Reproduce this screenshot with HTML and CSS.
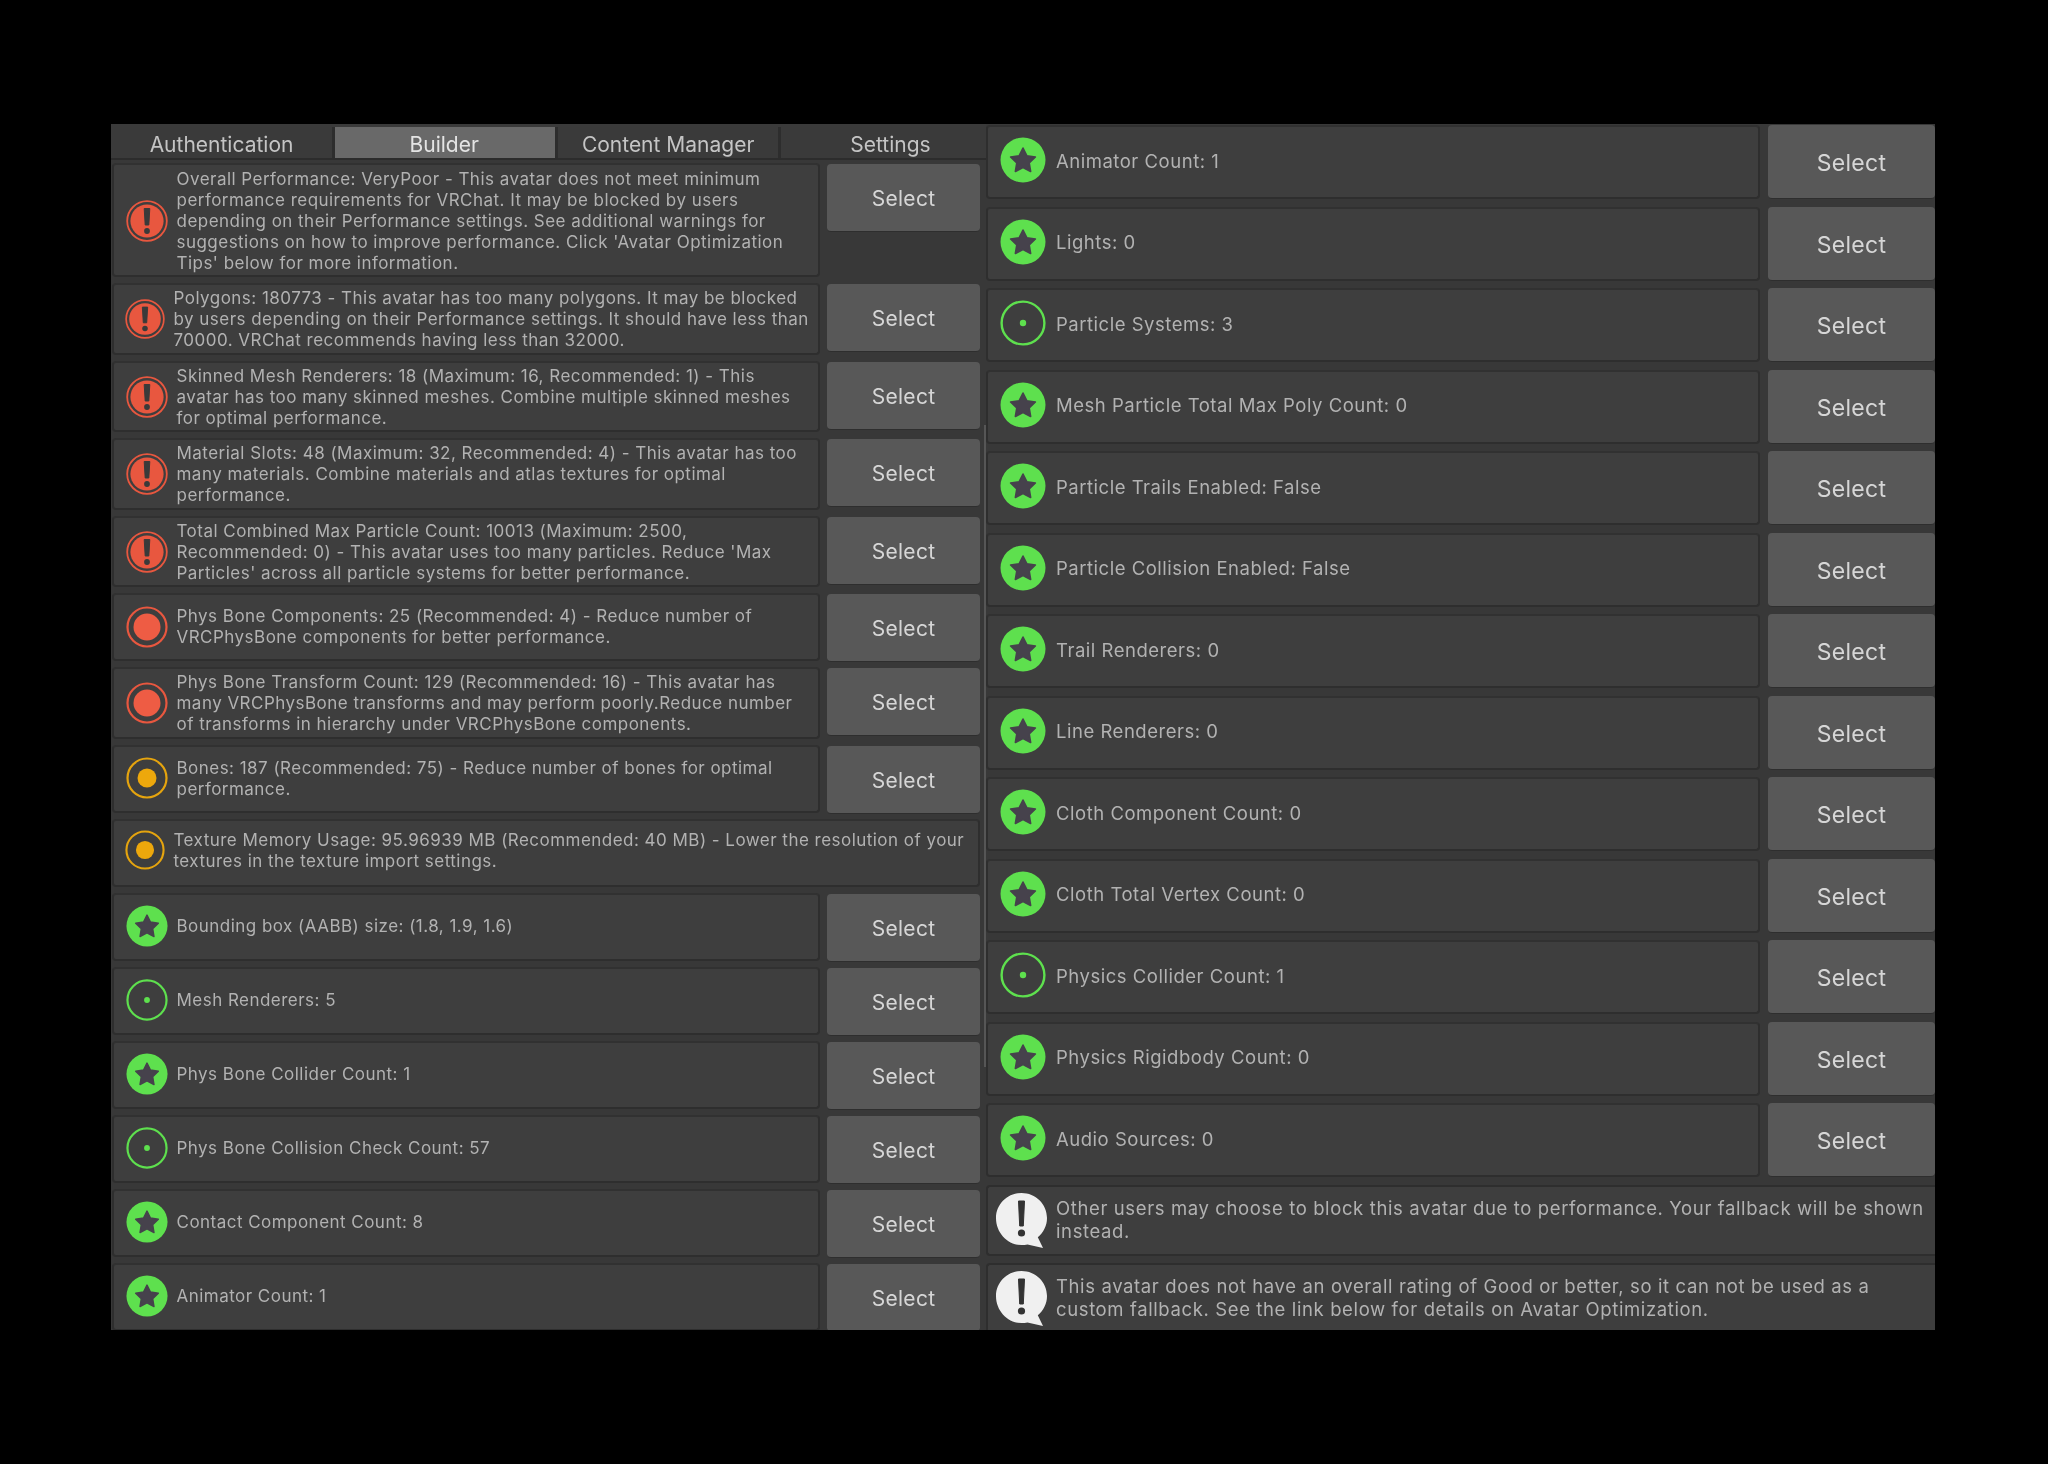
FILE: index.html
```html
<!DOCTYPE html>
<html lang="en">
<head>
<meta charset="utf-8">
<title>VRChat SDK Builder</title>
<link rel="stylesheet" href="styles.css">
</head>
<body>
<svg class="defs" width="0" height="0" aria-hidden="true">
  <symbol id="i-error" viewBox="0 0 42 42">
    <circle cx="21" cy="21" r="19.8" fill="none" stroke="#e8573f" stroke-width="1.8"/>
    <circle cx="21" cy="21" r="16.6" fill="#e8573f"/>
    <path d="M18.2 8.500h5.600l-1 16.500h-3.600z" fill="#3a3a3a" stroke="#3a3a3a" stroke-width="1" stroke-linejoin="round"/>
    <circle cx="21" cy="31" r="2.900" fill="#3a3a3a"/>
  </symbol>
  <symbol id="i-red" viewBox="0 0 42 42">
    <circle cx="21" cy="21" r="19.5" fill="none" stroke="#e8573f" stroke-width="2.2"/>
    <circle cx="21" cy="21" r="13.5" fill="#ee5c44"/>
  </symbol>
  <symbol id="i-yellow" viewBox="0 0 42 42">
    <circle cx="21" cy="21" r="19.5" fill="none" stroke="#e5a40e" stroke-width="2.2"/>
    <circle cx="21" cy="21" r="9.5" fill="#eda80c"/>
  </symbol>
  <symbol id="i-star" viewBox="0 0 46 46">
    <circle cx="23" cy="23" r="22.5" fill="#5ee04e"/>
    <path d="M23 11L26.800 18.700 35.400 20 29.200 26 30.640 34.500 23 30.500 15.360 34.500 16.800 26 10.600 20 19.200 18.700z" fill="#46424c" stroke="#46424c" stroke-width="1.600" stroke-linejoin="round"/>
  </symbol>
  <symbol id="i-dot" viewBox="0 0 46 46">
    <circle cx="23" cy="23" r="21.4" fill="none" stroke="#5ee04e" stroke-width="2.400"/>
    <circle cx="23" cy="23" r="3.200" fill="#5ee04e"/>
  </symbol>
  <symbol id="i-info" viewBox="0 0 51 55">
    <path d="M25.500 0C39.600 0 51 11.200 51 25c0 7.800-3.600 14.700-9.200 19.300L47 55l-15.500-3.600C29.600 51.800 27.600 52 25.500 52 11.400 52 0 39.800 0 25 0 11.200 11.400 0 25.500 0z" fill="#f0f0f0"/>
    <path d="M22.500 8h6l-1.200 25h-3.600z" fill="#333" stroke="#333" stroke-width="1" stroke-linejoin="round"/>
    <circle cx="25.500" cy="40" r="3.600" fill="#333"/>
  </symbol>
</svg>

<main class="panel">
  <section class="col-left">
    <nav class="tabs">
      <div class="tab tab-first">Authentication</div>
      <div class="tab tab-on">Builder</div>
      <div class="tab">Content Manager</div>
      <div class="tab">Settings</div>
    </nav>

    <div class="list-left">
      <div class="row h5">
        <div class="box"><svg class="ic"><use href="#i-error"/></svg><p>Overall Performance: VeryPoor - This avatar does not meet minimum<br>performance requirements for VRChat. It may be blocked by users<br>depending on their Performance settings. See additional warnings for<br>suggestions on how to improve performance. Click 'Avatar Optimization<br>Tips' below for more information.</p></div>
        <button class="btn">Select</button>
      </div>
      <div class="row h3">
        <div class="box tight"><svg class="ic"><use href="#i-error"/></svg><p>Polygons: 180773 - This avatar has too many polygons. It may be blocked<br>by users depending on their Performance settings. It should have less than<br>70000. VRChat recommends having less than 32000.</p></div>
        <button class="btn">Select</button>
      </div>
      <div class="row h3">
        <div class="box"><svg class="ic"><use href="#i-error"/></svg><p>Skinned Mesh Renderers: 18 (Maximum: 16, Recommended: 1) - This<br>avatar has too many skinned meshes. Combine multiple skinned meshes<br>for optimal performance.</p></div>
        <button class="btn">Select</button>
      </div>
      <div class="row h3">
        <div class="box"><svg class="ic"><use href="#i-error"/></svg><p>Material Slots: 48 (Maximum: 32, Recommended: 4) - This avatar has too<br>many materials. Combine materials and atlas textures for optimal<br>performance.</p></div>
        <button class="btn">Select</button>
      </div>
      <div class="row h3">
        <div class="box"><svg class="ic"><use href="#i-error"/></svg><p>Total Combined Max Particle Count: 10013 (Maximum: 2500,<br>Recommended: 0) - This avatar uses too many particles. Reduce 'Max<br>Particles' across all particle systems for better performance.</p></div>
        <button class="btn">Select</button>
      </div>
      <div class="row h2">
        <div class="box"><svg class="ic"><use href="#i-red"/></svg><p>Phys Bone Components: 25 (Recommended: 4) - Reduce number of<br>VRCPhysBone components for better performance.</p></div>
        <button class="btn">Select</button>
      </div>
      <div class="row h3">
        <div class="box"><svg class="ic"><use href="#i-red"/></svg><p>Phys Bone Transform Count: 129 (Recommended: 16) - This avatar has<br>many VRCPhysBone transforms and may perform poorly.Reduce number<br>of transforms in hierarchy under VRCPhysBone components.</p></div>
        <button class="btn">Select</button>
      </div>
      <div class="row h2">
        <div class="box"><svg class="ic"><use href="#i-yellow"/></svg><p>Bones: 187 (Recommended: 75) - Reduce number of bones for optimal<br>performance.</p></div>
        <button class="btn">Select</button>
      </div>
      <div class="row h2">
        <div class="box tight"><svg class="ic"><use href="#i-yellow"/></svg><p>Texture Memory Usage: 95.96939 MB (Recommended: 40 MB) - Lower the resolution of your<br>textures in the texture import settings.</p></div>
      </div>
      <div class="row h2">
        <div class="box"><svg class="ic"><use href="#i-star"/></svg><p>Bounding box (AABB) size: (1.8, 1.9, 1.6)</p></div>
        <button class="btn">Select</button>
      </div>
      <div class="row h2">
        <div class="box"><svg class="ic"><use href="#i-dot"/></svg><p>Mesh Renderers: 5</p></div>
        <button class="btn">Select</button>
      </div>
      <div class="row h2">
        <div class="box"><svg class="ic"><use href="#i-star"/></svg><p>Phys Bone Collider Count: 1</p></div>
        <button class="btn">Select</button>
      </div>
      <div class="row h2">
        <div class="box"><svg class="ic"><use href="#i-dot"/></svg><p>Phys Bone Collision Check Count: 57</p></div>
        <button class="btn">Select</button>
      </div>
      <div class="row h2">
        <div class="box"><svg class="ic"><use href="#i-star"/></svg><p>Contact Component Count: 8</p></div>
        <button class="btn">Select</button>
      </div>
      <div class="row h2">
        <div class="box"><svg class="ic"><use href="#i-star"/></svg><p>Animator Count: 1</p></div>
        <button class="btn">Select</button>
      </div>
    </div>
    <div class="scroll-thumb"></div>
  </section>

  <section class="col-right">
    <div class="rrow"><div class="box"><svg class="ic"><use href="#i-star"/></svg><p>Animator Count: 1</p></div><button class="btn">Select</button></div>
    <div class="rrow"><div class="box"><svg class="ic"><use href="#i-star"/></svg><p>Lights: 0</p></div><button class="btn">Select</button></div>
    <div class="rrow"><div class="box"><svg class="ic"><use href="#i-dot"/></svg><p>Particle Systems: 3</p></div><button class="btn">Select</button></div>
    <div class="rrow"><div class="box"><svg class="ic"><use href="#i-star"/></svg><p>Mesh Particle Total Max Poly Count: 0</p></div><button class="btn">Select</button></div>
    <div class="rrow"><div class="box"><svg class="ic"><use href="#i-star"/></svg><p>Particle Trails Enabled: False</p></div><button class="btn">Select</button></div>
    <div class="rrow"><div class="box"><svg class="ic"><use href="#i-star"/></svg><p>Particle Collision Enabled: False</p></div><button class="btn">Select</button></div>
    <div class="rrow"><div class="box"><svg class="ic"><use href="#i-star"/></svg><p>Trail Renderers: 0</p></div><button class="btn">Select</button></div>
    <div class="rrow"><div class="box"><svg class="ic"><use href="#i-star"/></svg><p>Line Renderers: 0</p></div><button class="btn">Select</button></div>
    <div class="rrow"><div class="box"><svg class="ic"><use href="#i-star"/></svg><p>Cloth Component Count: 0</p></div><button class="btn">Select</button></div>
    <div class="rrow"><div class="box"><svg class="ic"><use href="#i-star"/></svg><p>Cloth Total Vertex Count: 0</p></div><button class="btn">Select</button></div>
    <div class="rrow"><div class="box"><svg class="ic"><use href="#i-dot"/></svg><p>Physics Collider Count: 1</p></div><button class="btn">Select</button></div>
    <div class="rrow"><div class="box"><svg class="ic"><use href="#i-star"/></svg><p>Physics Rigidbody Count: 0</p></div><button class="btn">Select</button></div>
    <div class="rrow"><div class="box"><svg class="ic"><use href="#i-star"/></svg><p>Audio Sources: 0</p></div><button class="btn">Select</button></div>
    <div class="notice"><svg class="ic-info"><use href="#i-info"/></svg><p>Other users may choose to block this avatar due to performance. Your fallback will be shown<br>instead.</p></div>
    <div class="notice"><svg class="ic-info"><use href="#i-info"/></svg><p>This avatar does not have an overall rating of Good or better, so it can not be used as a<br>custom fallback. See the link below for details on Avatar Optimization.</p></div>
  </section>
</main>
</body>
</html>
```
FILE: styles.css
```css
* { box-sizing: border-box; }
html, body { margin: 0; background: #000; }
body { padding: 124px 113px 134px 111px; font-family: Inter, "Noto Sans", sans-serif; }
.defs { position: absolute; }

.panel {
  display: flex;
  width: 1824px;
  height: 1206px;
  overflow: hidden;
  background: #383838;
  filter: blur(0.45px);
}

p { margin: 0; white-space: nowrap; }

.col-left { width: 875px; flex: none; display: flex; flex-direction: column; overflow: hidden; position: relative; }
.col-right { flex: 1; display: flex; flex-direction: column; gap: 7.5px; padding-top: 1px; }

.scroll-thumb { position: absolute; top: 301px; left: 873px; width: 1.5px; height: 642px; background: #565656; }

.tabs { display: flex; height: 36px; background: #3a3a3a; border-bottom: 2px solid #2c2c2c; flex: none; }
.tab {
  width: 222.400px;
  flex: none;
  display: flex;
  align-items: center;
  justify-content: center;
  padding-top: 3px;
  font-size: 21px;
  color: #c4c4c4;
  border-left: 3px solid #2d2d2d;
  margin-top: 3px;
}
.tab-first { border-left: 0; width: 221px; }
.tab-on { background: #696969; color: #e4e4e4; width: 223.400px; padding-right: 2px; }

.list-left { display: flex; flex-direction: column; gap: 6px; padding-top: 3px; }

.row { display: flex; gap: 7px; flex: none; padding: 0 6px 0 1px; }
.h5 { height: 114px; }
.h3 { height: 71.5px; }
.h2 { height: 68px; }
.h5 p, .h3 p { padding-top: 2px; }

.box {
  flex: 1;
  min-width: 0;
  display: flex;
  align-items: center;
  background: #3e3e3e;
  border: 2px solid #2e2e2e;
  border-top-color: #313131;
  border-radius: 4px;
  color: #b2b2b2;
}

.row .box { padding-left: 12px; font-size: 17px; line-height: 21px; letter-spacing: 0.47px; }
.row .ic { width: 42px; height: 42px; flex: none; margin-right: 8.5px; }
.h5 .ic, .h3 .ic { margin-top: 1px; }
.h2 .ic { margin-top: -1px; }
.row .tight { padding-left: 11px; }
.row .tight .ic { width: 40px; height: 40px; margin-right: 8.5px; }
.h2 .tight p { padding-bottom: 4px; }
.h2 .tight .ic { margin-top: -5px; }

.btn {
  font-family: inherit;
  background: #585858;
  border: 0;
  border-bottom: 1px solid #2e2e2e;
  border-radius: 4px;
  color: #d6d6d6;
  padding: 2px 0 0;
  letter-spacing: 0.3px;
}
.row .btn { width: 153px; height: 68px; margin-top: 1px; font-size: 21px; flex: none; }

.rrow { display: flex; gap: 8px; height: 74px; flex: none; }
.rrow .box { padding-left: 12px; font-size: 18.5px; letter-spacing: 0.52px; }
.rrow p { padding-bottom: 3px; }
.rrow .ic { width: 46px; height: 46px; flex: none; margin: -4px 10px 0 0; }
.rrow .btn { width: 167px; height: 74px; font-size: 23px; flex: none; padding-top: 3px; }

.notice {
  flex: none;
  display: flex;
  align-items: center;
  height: 71px;
  padding-left: 8px;
  background: #3e3e3e;
  border: 2px solid #2e2e2e;
  border-right: 0;
  border-radius: 4px 0 0 4px;
  color: #b2b2b2;
  font-size: 18.5px;
  line-height: 23px;
  letter-spacing: 0.62px;
}
.notice + .notice p { padding-bottom: 2px; }
.ic-info { width: 51px; height: 55px; flex: none; margin-right: 9px; }
```
